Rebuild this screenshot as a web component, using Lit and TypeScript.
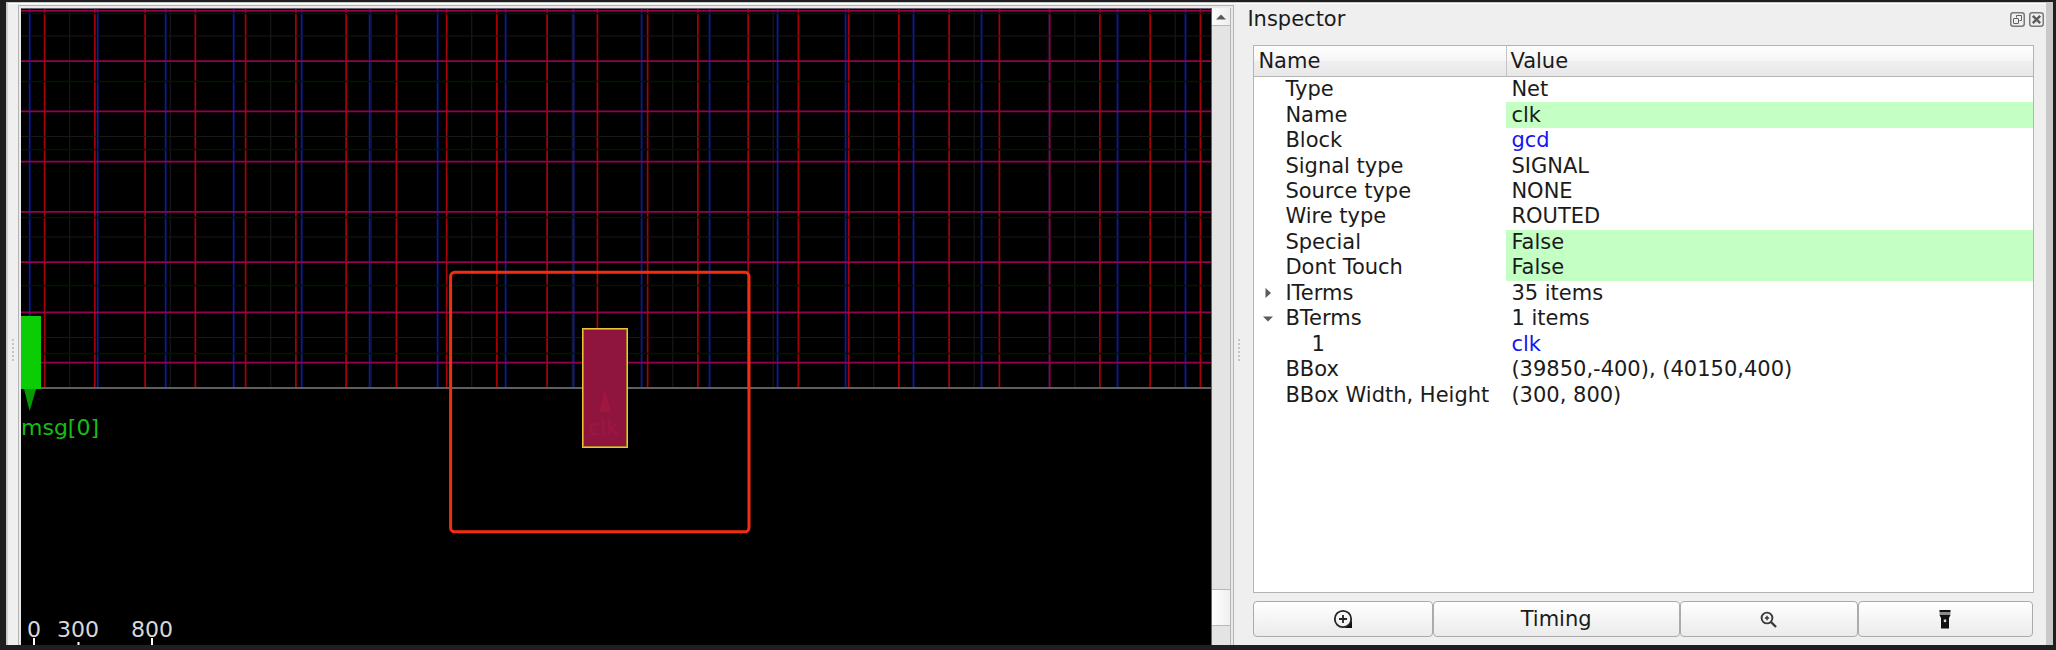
import { LitElement, html, svg, css, nothing } from "lit";
import { customElement, property, state } from "lit/decorators.js";

const PX_PER_UNIT = 0.1478;
const DIE_EDGE = 379;
const EXTENT = 4000;

interface TrackSet {
  kind: string;
  start: number;
  pitch: number;
}

const VERTICAL_TRACKS: TrackSet[] = [
  { kind: "faint", start: 48.7, pitch: 680 },
  { kind: "blue", start: 8.7, pitch: 460 },
  { kind: "red", start: 23.6, pitch: 340 },
];

const HORIZONTAL_TRACKS: TrackSet[] = [
  { kind: "faint", start: 27, pitch: 680 },
  { kind: "green", start: 4.6, pitch: 460 },
  { kind: "pink", start: 1.8, pitch: 340 },
];

function positions(set: TrackSet, limit: number): number[] {
  const step = set.pitch * PX_PER_UNIT;
  const out: number[] = [];
  for (let p = set.start; p < limit; p += step) out.push(p);
  return out;
}

@customElement("layout-view")
export class LayoutView extends LitElement {
  static styles = css`
    :host {
      display: flex;
      min-width: 0;
      border: 1px solid #b4b4b4;
      border-bottom: 0;
      padding: 2px 0 0 2px;
      background: #e9e9e9;
      box-sizing: border-box;
    }
    .canvas {
      flex: 1;
      min-width: 0;
      display: flex;
      background: #000;
      border: 1px solid #666;
      border-width: 1px 1px 0 0;
    }
    .drawing {
      flex: 1;
      min-width: 0;
      display: block;
      font-family: "DejaVu Sans", sans-serif;
      font-size: 22px;
    }
    .red { stroke: #a80206; stroke-width: 1.7; }
    .blue { stroke: #0a1c98; stroke-width: 1.8; }
    .pink { stroke: #960050; stroke-width: 1.8; }
    .green { stroke: #021703; stroke-width: 1.5; }
    .faint { stroke: #171916; stroke-width: 1.2; }
    .edge { stroke: #5f5f61; stroke-width: 2; }
    .pin { fill: #0acd05; }
    .pin-arrow { fill: #089a05; }
    .pin-name { fill: #18bd14; }
    .net { fill: #90153e; stroke: #b08420; stroke-width: 2; }
    .net-line { fill: none; stroke: #e8c63a; stroke-width: 1; }
    .net-ghost { fill: #9e1741; }
    .focus { fill: none; stroke: #f42c12; stroke-width: 3; }
    .scale { fill: #d8d8d8; text-anchor: middle; }
    .tick { stroke: #fff; stroke-width: 2; }
    .scrollbar {
      width: 18px;
      display: flex;
      flex-direction: column;
      background: #e4e4e4;
      border-right: 1px solid #b4b4b4;
      margin-right: 2px;
    }
    .step {
      height: 18px;
      padding: 0;
      border: 0;
      border-bottom: 1px solid #b8b8b8;
      background: linear-gradient(90deg, #fdfdfd, #ededed);
      display: flex;
      align-items: center;
      justify-content: center;
    }
    .groove { flex: 1; }
    .thumb {
      height: 35px;
      border: 1px solid #b8b8b8;
      border-width: 1px 0;
      background: linear-gradient(90deg, #fff, #efefef);
    }
    .groove-end { height: 19px; }
  `;

  render() {
    return html`
      <div class="canvas">
        <svg class="drawing" width="100%" height="100%" role="img" aria-label="Layout">
          ${VERTICAL_TRACKS.map((t) =>
            positions(t, EXTENT).map(
              (x) => svg`<line class=${t.kind} x1=${x} x2=${x} y1="0" y2=${DIE_EDGE} />`
            )
          )}
          ${HORIZONTAL_TRACKS.map((t) =>
            positions(t, DIE_EDGE).map(
              (y) => svg`<line class=${t.kind} x1="0" x2="100%" y1=${y} y2=${y} />`
            )
          )}
          <line class="edge" x1="0" x2="100%" y1="379" y2="379" />
          <rect class="pin" x="-1" y="307" width="21" height="73" />
          <path class="pin-arrow" d="M3 380H15L8.7 402Z" />
          <text class="pin-name" x="0" y="426">msg[0]</text>
          <rect class="net" x="562" y="320" width="44" height="118" />
          <rect class="net-line" x="561.5" y="319.5" width="45" height="119" />
          <path class="net-ghost" d="M584 381L590 403H578Z" />
          <text class="net-ghost" x="567" y="426">clk</text>
          <rect class="focus" x="429.6" y="263.3" width="298.4" height="259.5" rx="4" />
          <svg class="scale" y="100%" overflow="visible">
            <text x="13" y="-8">0</text>
            <text x="57" y="-8">300</text>
            <text x="131" y="-8">800</text>
            <path class="tick" d="M13 -7V0M57.5 -3V0M131 -7V0" />
          </svg>
        </svg>
      </div>
      <div class="scrollbar">
        <button class="step" aria-label="Scroll up">
          <svg width="10" height="6" viewBox="0 0 10 6"><path d="M0 5.5L5 .5L10 5.5Z" fill="#5a5a5a" /></svg>
        </button>
        <div class="groove"></div>
        <div class="thumb"></div>
        <div class="groove-end"></div>
      </div>
    `;
  }
}

interface Row {
  name: string;
  value: string;
  editable?: boolean;
  link?: boolean;
  group?: string;
  parent?: string;
}

const ROWS: Row[] = [
  { name: "Type", value: "Net" },
  { name: "Name", value: "clk", editable: true },
  { name: "Block", value: "gcd", link: true },
  { name: "Signal type", value: "SIGNAL" },
  { name: "Source type", value: "NONE" },
  { name: "Wire type", value: "ROUTED" },
  { name: "Special", value: "False", editable: true },
  { name: "Dont Touch", value: "False", editable: true },
  { name: "ITerms", value: "35 items", group: "iterms" },
  { name: "BTerms", value: "1 items", group: "bterms" },
  { name: "1", value: "clk", link: true, parent: "bterms" },
  { name: "BBox", value: "(39850,-400), (40150,400)" },
  { name: "BBox Width, Height", value: "(300, 800)" },
];

@customElement("inspector-panel")
export class InspectorPanel extends LitElement {
  @property({ type: Array }) rows: Row[] = ROWS;
  @state() private open: string[] = ["bterms"];

  static styles = css`
    :host {
      display: flex;
      flex-direction: column;
      min-width: 0;
      padding: 0 12px 8px 0;
      font-family: "DejaVu Sans", sans-serif;
      font-size: 21px;
      color: #1b1b1b;
    }
    .title {
      display: flex;
      align-items: center;
      height: 30px;
      margin: 0 -10px 11px 0;
      gap: 4px;
    }
    .title h2 {
      flex: 1;
      margin: 0;
      font-size: inherit;
      font-weight: normal;
      line-height: 26px;
    }
    .tool {
      width: 15px;
      height: 15px;
      padding: 0;
      border: 0;
      background: none;
      display: block;
    }
    .tool svg { display: block; }
    .tree {
      flex: 1;
      margin-left: 6px;
      border: 1px solid #b4b4b4;
      background: #fff;
    }
    table {
      width: 100%;
      border-collapse: separate;
      border-spacing: 0;
      table-layout: fixed;
      height: 362px;
    }
    .name-col { width: 252px; }
    th {
      height: 31px;
      box-sizing: border-box;
      padding: 0 4px;
      text-align: left;
      font-weight: normal;
      line-height: 30px;
      border-bottom: 1px solid #b4b4b4;
      background: linear-gradient(#fdfdfd 0 5%, #f6f6f6 50%, #efefef 50%, #e8e8e8);
    }
    th + th { border-left: 1px solid #c4c4c4; padding-left: 3px; }
    td {
      padding: 0 0 0 5px;
      line-height: 25px;
      white-space: nowrap;
    }
    .cell { display: flex; align-items: center; }
    .arrow {
      width: 18px;
      height: 20px;
      padding: 0;
      margin-right: 8px;
      border: 0;
      background: none;
      display: flex;
      align-items: center;
      justify-content: center;
    }
    .blank { width: 26px; }
    .child { width: 52px; }
    .editable { background: #c4ffc4; }
    a { color: #1515f0; text-decoration: none; }
    .actions {
      display: grid;
      grid-template-columns: 179fr 247fr 178fr 175fr;
      margin: 8px 1px 0 6px;
    }
    .action {
      height: 36px;
      padding: 0;
      font: inherit;
      color: inherit;
      border: 1px solid #ababab;
      border-radius: 4px;
      background: linear-gradient(#fff, #ebebeb);
      display: flex;
      align-items: center;
      justify-content: center;
    }
  `;

  private toggle(group: string) {
    this.open = this.open.includes(group)
      ? this.open.filter((g) => g !== group)
      : [...this.open, group];
  }

  private renderLead(row: Row) {
    if (!row.group) return html`<span class=${row.parent ? "child" : "blank"}></span>`;
    const isOpen = this.open.includes(row.group);
    return html`<button
      class="arrow"
      aria-label="Toggle ${row.name}"
      aria-expanded=${isOpen ? "true" : "false"}
      @click=${() => this.toggle(row.group!)}
    >
      <svg width="10" height="10" viewBox="0 0 10 10">
        <path d=${isOpen ? "M0 2.5H10L5 7.5Z" : "M2.5 0V10L8 5Z"} fill="#5c5c5c" />
      </svg>
    </button>`;
  }

  render() {
    return html`
      <div class="title">
        <h2>Inspector</h2>
        <button class="tool" aria-label="Float">
          <svg width="15" height="15" viewBox="0 0 15 15" fill="none" stroke="#606060">
            <rect x=".75" y=".75" width="13.5" height="13.5" rx="2.5" stroke="#7a7a7a" stroke-width="1.5" />
            <path d="M6.5 5.5V3.5H11.5V8.5H9.5" />
            <rect x="3.5" y="6.5" width="5" height="5" rx=".5" />
          </svg>
        </button>
        <button class="tool" aria-label="Close">
          <svg width="15" height="15" viewBox="0 0 15 15" fill="none">
            <rect x=".75" y=".75" width="13.5" height="13.5" rx="2.5" stroke="#7a7a7a" stroke-width="1.5" />
            <path d="M3.8 3.8L11.2 11.2M11.2 3.8L3.8 11.2" stroke="#5c5c5c" stroke-width="2.4" />
          </svg>
        </button>
      </div>
      <div class="tree">
        <table>
          <colgroup><col class="name-col" /><col /></colgroup>
          <thead>
            <tr><th scope="col">Name</th><th scope="col">Value</th></tr>
          </thead>
          <tbody>
            ${this.rows.map((row) =>
              row.parent && !this.open.includes(row.parent)
                ? nothing
                : html`<tr>
                    <td><div class="cell">${this.renderLead(row)}<span>${row.name}</span></div></td>
                    <td class=${row.editable ? "editable" : ""}>
                      ${row.link ? html`<a href="#${row.value}">${row.value}</a>` : row.value}
                    </td>
                  </tr>`
            )}
          </tbody>
        </table>
      </div>
      <div class="actions">
        <button class="action" aria-label="Zoom to">
          <svg width="20" height="20" viewBox="0 0 20 20" fill="none" stroke="#252525" stroke-width="1.8">
            <circle cx="10" cy="10" r="8.2" />
            <path d="M10 6V14M6 10H14" />
            <path d="M19 11V19H11Q17 17 19 11Z" fill="#111" stroke="none" />
          </svg>
        </button>
        <button class="action">Timing</button>
        <button class="action" aria-label="Zoom in">
          <svg width="17" height="17" viewBox="0 0 17 17" fill="none" stroke="#3a3a3a">
            <circle cx="7" cy="7" r="5.4" stroke-width="1.9" />
            <path d="M11 11L16 16" stroke-width="2.4" />
            <path d="M7 4.8V9.2M4.8 7H9.2" stroke-width="1.5" />
          </svg>
        </button>
        <button class="action" aria-label="Highlight">
          <svg width="12" height="20" viewBox="0 0 12 20">
            <path d="M.5 1H11.5V3H.5Z" fill="#111" />
            <path d="M.5 3H11.5V6H.5Z" fill="#8a8a8a" />
            <path d="M.5 6H11.5L10 9V19.5H2V9Z" fill="#111" />
            <rect x="4.8" y="10.5" width="2.4" height="2.6" fill="#ddd" />
          </svg>
        </button>
      </div>
    `;
  }
}

@customElement("app-root")
export class AppRoot extends LitElement {
  static styles = css`
    :host {
      display: flex;
      box-sizing: border-box;
      min-height: 100vh;
      padding: 2px 3px 5px 6px;
      background: #1f1f1f;
    }
    .window {
      flex: 1;
      min-width: 0;
      display: grid;
      grid-template-columns: 11px minmax(0, 1217fr) 13px minmax(0, 799fr);
      background: #efefef;
      border: 1px solid #c9c9c9;
      border-width: 1px 7px 0 1px;
      box-shadow: inset 0 1px #fff;
    }
    .splitter {
      display: flex;
      align-items: center;
      justify-content: center;
    }
    .splitter.outer { border-left: 1px solid #d6d2cf; }
    .splitter.inner { padding-right: 4px; }
    .grip {
      width: 2px;
      height: 22px;
      margin-top: 52px;
      background: repeating-linear-gradient(#c6c6c6 0 2px, transparent 2px 4px);
    }
    layout-view { margin-top: 2px; }
    inspector-panel { margin-top: 1px; }
  `;

  render() {
    return html`
      <main class="window">
        <div class="splitter outer"><span class="grip"></span></div>
        <layout-view></layout-view>
        <div class="splitter inner"><span class="grip"></span></div>
        <inspector-panel></inspector-panel>
      </main>
    `;
  }
}
